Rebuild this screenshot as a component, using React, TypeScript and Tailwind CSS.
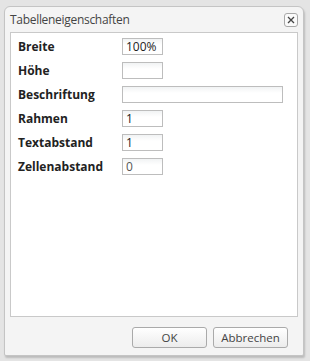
const rows: { label: string; value: string; wide?: boolean; muted?: boolean }[] = [
  { label: "Breite", value: "100%" },
  { label: "Höhe", value: "" },
  { label: "Beschriftung", value: "", wide: true },
  { label: "Rahmen", value: "1" },
  { label: "Textabstand", value: "1" },
  { label: "Zellenabstand", value: "0", muted: true },
];

const App = () => {
  return (
    <div
      className="w-[310px] h-[361px] bg-[#e4e4e4] pt-[6px] pl-[4px]"
      style={{ fontFamily: '"Open Sans", "Liberation Sans", sans-serif' }}
    >
      <div className="w-[300px] h-[350px] flex flex-col rounded-t-[6px] rounded-b-[2px] border border-[#c4c4c4] bg-[#f4f4f4] shadow-[1px_2px_2px_rgba(0,0,0,0.18)]">
        <div className="h-[25px] flex items-center justify-between pl-[5px] pr-[5px]">
          <span className="text-[12px] tracking-[-0.3px] text-[#444] leading-none mt-[1px]">
            Tabelleneigenschaften
          </span>
          <button className="w-[14px] h-[14px] mt-[1px] flex items-center justify-center rounded-[3px] border border-[#a8a8a8] bg-[#fafafa]">
            <svg width="8" height="8" viewBox="0 0 8 8">
              <path d="M1 1L7 7M7 1L1 7" stroke="#444" strokeWidth="1.3" />
            </svg>
          </button>
        </div>
        <div className="mx-[5px] h-[285px] border border-[#c9c9c9] bg-white pt-[5px] pl-[7px]">
          <div className="flex flex-col gap-[7px]">
            {rows.map((r) => (
              <div key={r.label} className="flex items-center h-[17px]">
                <span className="w-[104px] text-[12px] font-bold text-[#222]">
                  {r.label}
                </span>
                <div
                  className={`${r.wide ? "w-[161px]" : "w-[41px]"} h-[17px] border border-[#bdbdbd] bg-gradient-to-b from-[#f1f3f4] to-white to-40% flex items-center pl-[3px] text-[12px] leading-none ${r.muted ? "text-[#555]" : "text-[#222]"}`}
                >
                  {r.value}
                </div>
              </div>
            ))}
          </div>
        </div>
        <div className="flex justify-end gap-[6px] pr-[15px] pt-[10px]">
          <button className="w-[75px] h-[21px] rounded-[3px] border border-[#aaa] bg-gradient-to-b from-white to-[#ececec] text-[11.5px] text-[#444] leading-none">
            OK
          </button>
          <button className="w-[75px] h-[21px] rounded-[3px] border border-[#aaa] bg-gradient-to-b from-white to-[#ececec] text-[11.5px] text-[#444] leading-none">
            Abbrechen
          </button>
        </div>
      </div>
    </div>
  );
};

export default App;
